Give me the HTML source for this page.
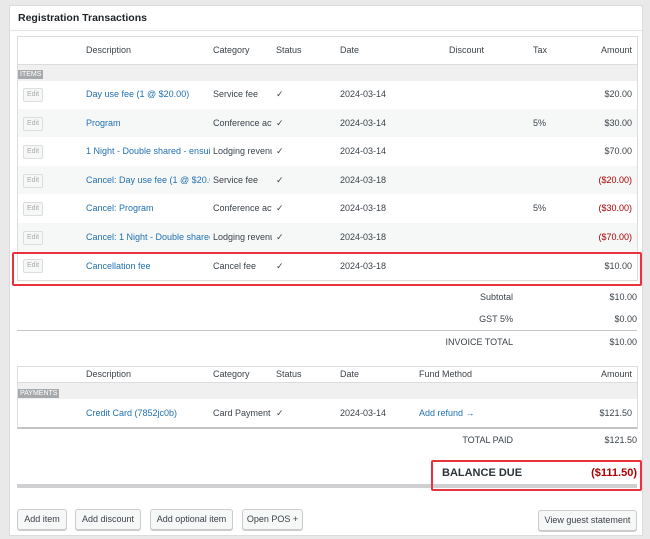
<!DOCTYPE html><html><head><style>
*{margin:0;padding:0;box-sizing:border-box}
body{width:650px;height:539px;background:#e9e9ea;font-family:"Liberation Sans",sans-serif;font-size:9px;color:#3c434a;position:relative;overflow:hidden}
.a{position:absolute;white-space:nowrap}
.panel{position:absolute;left:9px;top:5px;width:634px;height:531px;background:#fff;border:1px solid #dcdcde}
.l{color:#2271b1}.r{color:#a00}
.edit{position:absolute;left:23px;width:20px;height:14px;border:1px solid #ddd;border-radius:2px;background:#f6f7f7;color:#a7aaad;font-size:7px;text-align:center;line-height:12px}
.row{position:absolute;left:18px;width:619px;height:28.6px}
.g{background:#f6f7f7}
.btn{position:absolute;top:509px;height:21px;border:1px solid #ccc;border-radius:3px;background:#f6f7f7;color:#3c434a;line-height:19px;text-align:center;box-shadow:0 1px 0 #ccc;font-size:9px}
.tag{position:absolute;background:#a7aaad;color:#fff;font-size:7px;line-height:9px;padding:0 2px}
.rt{text-align:right}
</style></head><body>
<div class="panel"></div>
<div class="a" style="left:18px;top:12px;font-size:10.5px;font-weight:bold;color:#1d2327">Registration Transactions</div>
<div class="a" style="left:10px;top:30px;width:632px;height:1px;background:#e5e5e5"></div>
<div class="a" style="left:17px;top:36px;width:621px;height:245px;border:1px solid #dcdcde"></div>
<div class="a" style="left:18px;top:64px;width:619px;height:17px;background:#f0f0f1;border-top:1px solid #dcdcde"></div>
<div class="tag" style="left:18px;top:70px">ITEMS</div>
<div class="a" style="left:86px;top:45px">Description</div><div class="a" style="left:213px;top:45px">Category</div><div class="a" style="left:276px;top:45px">Status</div><div class="a" style="left:340px;top:45px">Date</div><div class="a" style="left:449px;top:45px">Discount</div><div class="a" style="left:533px;top:45px">Tax</div><div class="a rt" style="left:560px;width:72px;top:45px">Amount</div>

<div class="row" style="top:80px"></div>
<div class="row g" style="top:108.6px"></div>
<div class="row" style="top:137.2px"></div>
<div class="row g" style="top:165.8px"></div>
<div class="row" style="top:194.4px"></div>
<div class="row g" style="top:223px"></div>

<div class="edit" style="top:88px">Edit</div><div class="a l" style="left:86px;top:89px">Day use fee (1 @ $20.00)</div><div class="a" style="left:213px;top:89px">Service fee</div><div class="a" style="left:276px;top:89px">✓</div><div class="a" style="left:340px;top:89px">2024-03-14</div><div class="a rt" style="left:560px;width:72px;top:89px">$20.00</div>
<div class="edit" style="top:117px">Edit</div><div class="a l" style="left:86px;top:118px">Program</div><div class="a" style="left:213px;top:118px;width:59px;overflow:hidden">Conference activities</div><div class="a" style="left:276px;top:118px">✓</div><div class="a" style="left:340px;top:118px">2024-03-14</div><div class="a" style="left:533px;top:118px">5%</div><div class="a rt" style="left:560px;width:72px;top:118px">$30.00</div>
<div class="edit" style="top:145px">Edit</div><div class="a l" style="left:86px;top:146px;width:124px;overflow:hidden">1 Night - Double shared - ensuite</div><div class="a" style="left:213px;top:146px;width:59px;overflow:hidden">Lodging revenue</div><div class="a" style="left:276px;top:146px">✓</div><div class="a" style="left:340px;top:146px">2024-03-14</div><div class="a rt" style="left:560px;width:72px;top:146px">$70.00</div>
<div class="edit" style="top:174px">Edit</div><div class="a l" style="left:86px;top:175px;width:124px;overflow:hidden">Cancel: Day use fee (1 @ $20.00)</div><div class="a" style="left:213px;top:175px">Service fee</div><div class="a" style="left:276px;top:175px">✓</div><div class="a" style="left:340px;top:175px">2024-03-18</div><div class="a rt r" style="left:560px;width:72px;top:175px">($20.00)</div>
<div class="edit" style="top:202px">Edit</div><div class="a l" style="left:86px;top:203px">Cancel: Program</div><div class="a" style="left:213px;top:203px;width:59px;overflow:hidden">Conference activities</div><div class="a" style="left:276px;top:203px">✓</div><div class="a" style="left:340px;top:203px">2024-03-18</div><div class="a" style="left:533px;top:203px">5%</div><div class="a rt r" style="left:560px;width:72px;top:203px">($30.00)</div>
<div class="edit" style="top:231px">Edit</div><div class="a l" style="left:86px;top:232px;width:124px;overflow:hidden">Cancel: 1 Night - Double shared</div><div class="a" style="left:213px;top:232px;width:59px;overflow:hidden">Lodging revenue</div><div class="a" style="left:276px;top:232px">✓</div><div class="a" style="left:340px;top:232px">2024-03-18</div><div class="a rt r" style="left:560px;width:72px;top:232px">($70.00)</div>
<div class="edit" style="top:259px">Edit</div><div class="a l" style="left:86px;top:261px">Cancellation fee</div><div class="a" style="left:213px;top:261px">Cancel fee</div><div class="a" style="left:276px;top:261px">✓</div><div class="a" style="left:340px;top:261px">2024-03-18</div><div class="a rt" style="left:560px;width:72px;top:261px">$10.00</div>
<div class="a" style="left:12px;top:252px;width:630px;height:34px;border:2px solid #e8333f;border-radius:2px"></div>

<div class="a rt" style="left:400px;width:113px;top:292px">Subtotal</div><div class="a rt" style="left:560px;width:77px;top:292px">$10.00</div>
<div class="a rt" style="left:400px;width:113px;top:314px">GST 5%</div><div class="a rt" style="left:560px;width:77px;top:314px">$0.00</div>
<div class="a" style="left:17px;top:330px;width:620px;height:1px;background:#c3c4c7"></div>
<div class="a rt" style="left:400px;width:113px;top:337px">INVOICE TOTAL</div><div class="a rt" style="left:560px;width:77px;top:337px">$10.00</div>

<div class="a" style="left:17px;top:366px;width:621px;height:63px;border:1px solid #dcdcde;border-bottom:2px solid #c3c4c7"></div>
<div class="a" style="left:18px;top:382px;width:619px;height:17px;background:#f0f0f1;border-top:1px solid #dcdcde"></div>
<div class="tag" style="left:18px;top:389px">PAYMENTS</div>
<div class="a" style="left:86px;top:369px">Description</div><div class="a" style="left:213px;top:369px">Category</div><div class="a" style="left:276px;top:369px">Status</div><div class="a" style="left:340px;top:369px">Date</div><div class="a" style="left:419px;top:369px">Fund Method</div><div class="a rt" style="left:560px;width:72px;top:369px">Amount</div>
<div class="a l" style="left:86px;top:408px">Credit Card (7852jc0b)</div><div class="a" style="left:213px;top:408px">Card Payment</div><div class="a" style="left:276px;top:408px">✓</div><div class="a" style="left:340px;top:408px">2024-03-14</div><div class="a l" style="left:419px;top:408px">Add refund →</div><div class="a rt" style="left:560px;width:72px;top:408px">$121.50</div>
<div class="a rt" style="left:400px;width:113px;top:435px">TOTAL PAID</div><div class="a rt" style="left:560px;width:77px;top:435px">$121.50</div>

<div class="a" style="left:17px;top:484px;width:620px;height:4px;background:#d0d0d2"></div>
<div class="a" style="left:431px;top:460px;width:211px;height:31px;border:2px solid #e8333f;border-radius:2px"></div>
<div class="a" style="left:442px;top:467px;font-size:11px;font-weight:bold;color:#2c3338">BALANCE DUE</div>
<div class="a rt" style="left:540px;width:97px;top:467px;font-size:11px;font-weight:bold;color:#a00">($111.50)</div>

<div class="btn" style="left:17px;width:50px">Add item</div>
<div class="btn" style="left:75px;width:66px">Add discount</div>
<div class="btn" style="left:150px;width:83px">Add optional item</div>
<div class="btn" style="left:242px;width:61px">Open POS +</div>
<div class="btn" style="left:538px;width:99px;top:510px">View guest statement</div>
</body></html>
